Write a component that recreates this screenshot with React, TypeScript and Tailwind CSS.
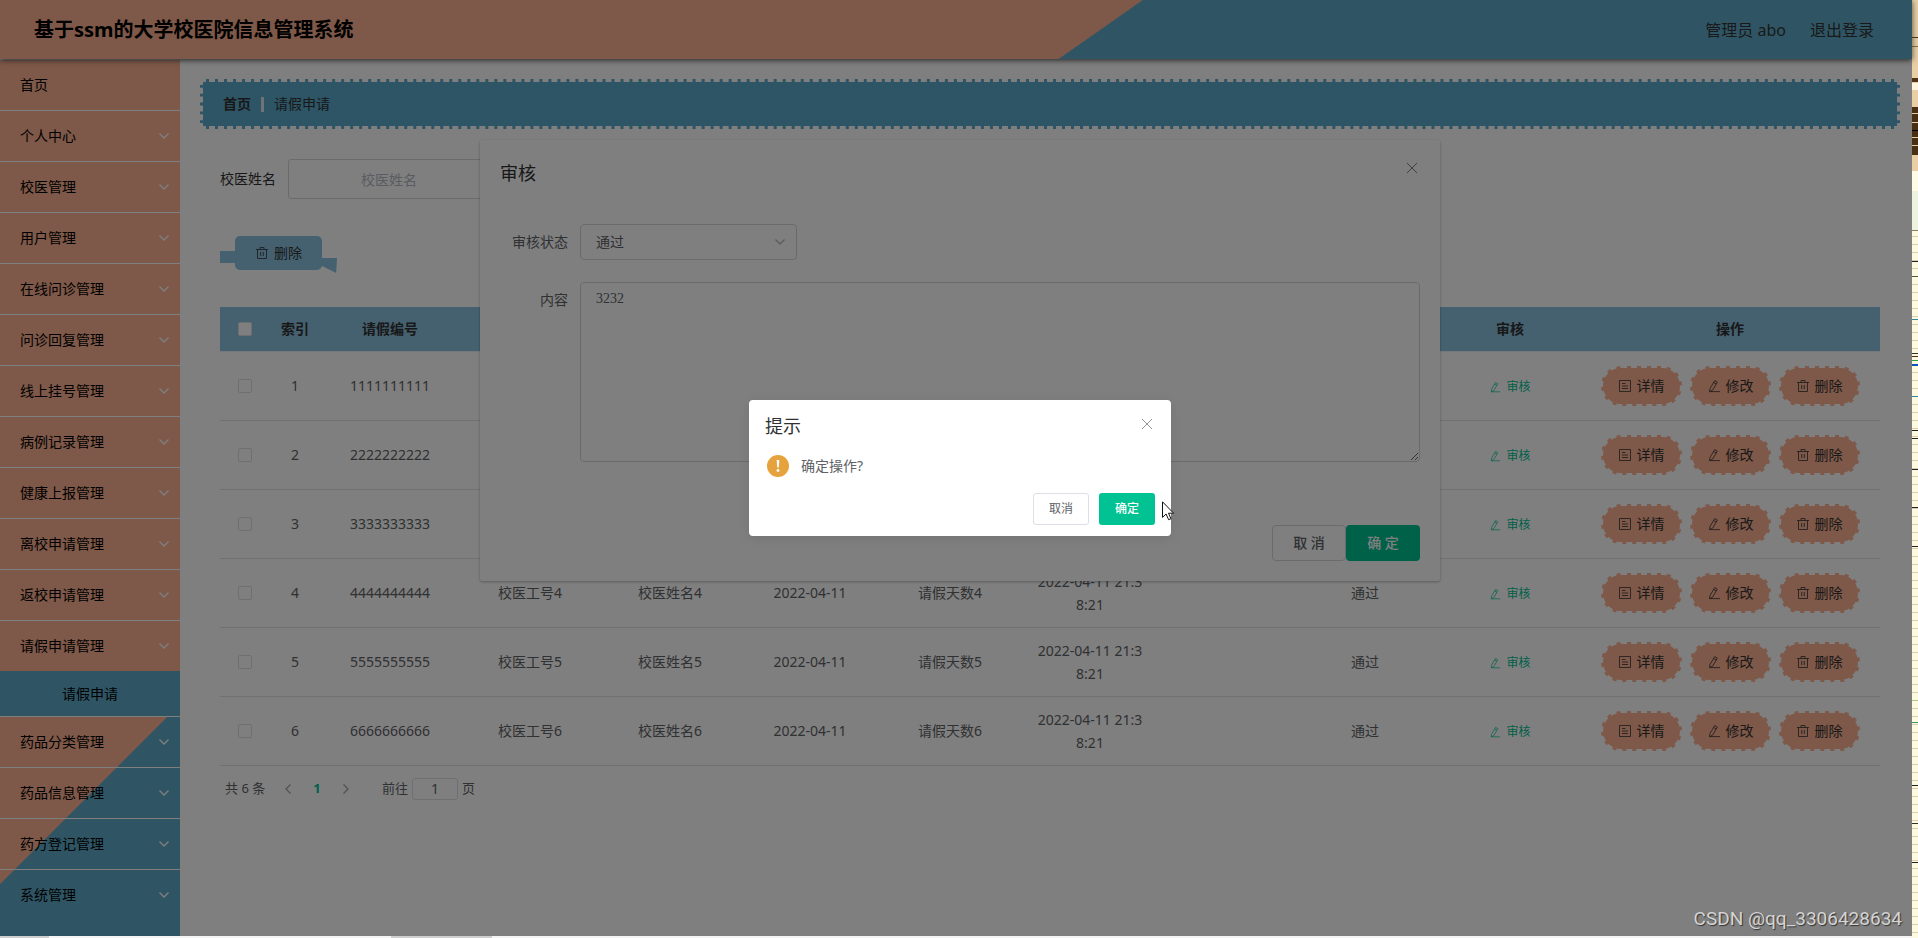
import React from "react";

const MENU = [
  "首页",
  "个人中心",
  "校医管理",
  "用户管理",
  "在线问诊管理",
  "问诊回复管理",
  "线上挂号管理",
  "病例记录管理",
  "健康上报管理",
  "离校申请管理",
  "返校申请管理",
  "请假申请管理",
  "药品分类管理",
  "药品信息管理",
  "药方登记管理",
  "系统管理",
];

const ACTIVE = "请假申请管理";

const HEADERS = ["索引", "请假编号", "校医工号", "校医姓名", "请假日期", "请假天数", "申请时间", "审核回复", "审核状态", "审核", "操作"];

const ROWS = [1, 2, 3, 4, 5, 6].map((n) => ({
  index: n,
  code: String(n).repeat(10),
  doctorId: `校医工号${n}`,
  doctorName: `校医姓名${n}`,
  date: "2022-04-11",
  days: `请假天数${n}`,
  time: "2022-04-11 21:38:21",
  status: "通过",
}));

function ChevronDown({ className = "" }: { className?: string }) {
  return (
    <svg className={className} width="12" height="12" viewBox="0 0 12 12" fill="none" stroke="currentColor" strokeWidth="1.3" aria-hidden="true">
      <path d="M1.5 3.5 6 8l4.5-4.5" />
    </svg>
  );
}

function TrashIcon() {
  return (
    <svg width="14" height="14" viewBox="0 0 14 14" fill="none" stroke="currentColor" strokeWidth="0.8" aria-hidden="true">
      <path d="M1 3.5h12M5 3.5v-2h4v2M2.5 3.5v9h9v-9M5.7 6v4M8.3 6v4" />
    </svg>
  );
}

function EditIcon({ size = 14 }: { size?: number }) {
  return (
    <svg width={size} height={size} viewBox="0 0 14 14" fill="none" stroke="currentColor" strokeWidth="0.8" aria-hidden="true">
      <path d="M7.7 1.6 10.3 3.1 5.6 11.2 2.6 12.6 2.9 9.7zM6.6 3.5l2.6 1.5M2.6 12.6H13" strokeLinejoin="round" />
    </svg>
  );
}

function DocIcon() {
  return (
    <svg width="14" height="14" viewBox="0 0 14 14" fill="none" stroke="currentColor" strokeWidth="0.8" aria-hidden="true">
      <path d="M1.5 1.5h11v11h-11zM4 4.5h3.5M4 7h6M4 9.5h6" />
    </svg>
  );
}

function CloseIcon() {
  return (
    <svg width="12" height="12" viewBox="0 0 12 12" fill="none" stroke="currentColor" aria-hidden="true">
      <path d="M1 1l10 10M11 1 1 11" />
    </svg>
  );
}

function Header() {
  return (
    <header className="relative z-10 mb-px flex h-[59px] items-center justify-between bg-[linear-gradient(145deg,#fcb090_57.2%,#5eabca_57.3%)] pr-[38px] pl-[34px] shadow-[0_1px_6px_#444]">
      <h1 className="text-xl font-bold text-black">基于ssm的大学校医院信息管理系统</h1>
      <div className="flex gap-6 text-base text-[#333]">
        <span>管理员 abo</span>
        <a href="#logout">退出登录</a>
      </div>
    </header>
  );
}

function Sidebar() {
  return (
    <nav className="w-[180px] shrink-0 bg-[linear-gradient(135deg,#fcb090_78%,#5eabca_78.1%)]">
      <ul className="divide-y divide-white text-sm text-black">
        {MENU.map((name) => (
          <li key={name}>
            <a href="#menu" className="flex h-[50px] items-center justify-between pr-[10px] pl-5">
              {name}
              {name !== "首页" && <ChevronDown className="text-white" />}
            </a>
            {name === ACTIVE && (
              <a href="#leave" className="flex h-[45px] items-center justify-center bg-[#5eabca]">
                请假申请
              </a>
            )}
          </li>
        ))}
      </ul>
    </nav>
  );
}

function Check({ label }: { label: string }) {
  return (
    <input
      type="checkbox"
      aria-label={label}
      className="mx-auto block size-[14px] appearance-none rounded-xs border border-[#dcdfe6] bg-white"
    />
  );
}

function RowButton({ icon, children }: { icon: React.ReactNode; children: React.ReactNode }) {
  return (
    <button className="flex h-10 w-[81px] items-center justify-center gap-[5px] rounded-[20px] border-2 border-dashed border-white bg-[#fcb090] text-sm text-[#333]">
      {icon}
      {children}
    </button>
  );
}

function LeaveTable() {
  return (
    <table className="mt-[37px] w-full table-fixed border-collapse text-center text-sm leading-[23px] text-[#606266]">
      <colgroup>
        <col className="w-[50px]" />
        <col className="w-[50px]" />
        <col className="w-[140px]" />
        <col className="w-[140px]" />
        <col className="w-[140px]" />
        <col className="w-[140px]" />
        <col className="w-[140px]" />
        <col className="w-[140px]" />
        <col className="w-[130px]" />
        <col className="w-[150px]" />
        <col className="w-[140px]" />
        <col className="w-[300px]" />
      </colgroup>
      <thead>
        <tr className="h-11 border-b border-[#ebeef5] bg-[#8ac2de] text-[#303133]">
          <th>
            <Check label="全选" />
          </th>
          {HEADERS.map((h) => (
            <th key={h} className="font-bold">
              {h}
            </th>
          ))}
        </tr>
      </thead>
      <tbody>
        {ROWS.map((r) => (
          <tr key={r.index} className="h-[69px] border-b border-[#dfe2ea]">
            <td>
              <Check label={`选择 ${r.index}`} />
            </td>
            <td>{r.index}</td>
            <td>{r.code}</td>
            <td>{r.doctorId}</td>
            <td>{r.doctorName}</td>
            <td>{r.date}</td>
            <td>{r.days}</td>
            <td className="px-3 break-all">{r.time}</td>
            <td />
            <td>{r.status}</td>
            <td>
              <button className="inline-flex items-center gap-[5px] align-middle text-xs text-[#00c292]">
                <EditIcon size={12} />
                审核
              </button>
            </td>
            <td>
              <div className="flex justify-center gap-2">
                <RowButton icon={<DocIcon />}>详情</RowButton>
                <RowButton icon={<EditIcon />}>修改</RowButton>
                <RowButton icon={<TrashIcon />}>删除</RowButton>
              </div>
            </td>
          </tr>
        ))}
      </tbody>
    </table>
  );
}

function Pagination() {
  return (
    <div className="mt-3 flex h-[22px] items-center pl-[5px] text-[13px] text-[#606266]">
      <span className="w-[57px]">共 6 条</span>
      <button aria-label="上一页" className="text-[#a0a4ac]">
        <ChevronDown className="rotate-90" />
      </button>
      <button className="w-[46px] font-bold text-[#00c292]">1</button>
      <button aria-label="下一页" className="text-[#a0a4ac]">
        <ChevronDown className="-rotate-90" />
      </button>
      <label className="ml-[30px] flex items-center gap-1">
        前往
        <input
          type="text"
          defaultValue="1"
          aria-label="页码"
          className="h-[22px] w-[46px] rounded-[3px] border border-[#dcdfe6] bg-white text-center text-sm"
        />
        页
      </label>
    </div>
  );
}

function Main() {
  return (
    <main className="min-w-0 flex-1 bg-white pt-[19px] pr-3 pl-5">
      <div className="flex h-[50px] items-center border-[3px] border-dashed border-white bg-[#5aabca] px-5 text-sm text-[#303133]">
        <a href="#home" className="font-bold">
          首页
        </a>
        <span className="mx-[10px] h-[15px] w-[3px] bg-[#dfe4ed]" />
        <span>请假申请</span>
      </div>
      <div className="px-5">
        <label className="mt-[30px] flex h-10 items-center gap-3 text-sm text-[#303133]">
          校医姓名
          <input
            type="text"
            placeholder="校医姓名"
            className="h-10 w-[202px] rounded-[3px] border border-[#d3d6de] bg-white text-center placeholder:text-[#b5b9c2]"
          />
        </label>
        <div className="relative mt-[37px] px-[15px]">
          <span className="absolute top-[15px] left-0 h-3 w-4 bg-[#8ac2de]" />
          <span className="absolute top-[22px] left-[101px] h-[15px] w-4 bg-[#8ac2de] [clip-path:polygon(0_0,100%_0,95%_100%,0_50%)]" />
          <button className="relative flex h-[34px] w-[87px] items-center justify-center gap-[5px] rounded-[5px] bg-[#8ac2de] text-sm text-[#303133]">
            <TrashIcon />
            删除
          </button>
        </div>
        <LeaveTable />
        <Pagination />
      </div>
    </main>
  );
}

function ReviewDialog() {
  return (
    <div className="absolute inset-0 flex items-start justify-center pt-[140px] pl-0.5">
      <section role="dialog" aria-label="审核" className="w-[960px] rounded-xs bg-white px-5 pb-5 text-sm text-[#606266] shadow-[0_1px_3px_rgba(0,0,0,0.3)]">
        <div className="flex h-[84px] items-start justify-between pt-5 pr-[2px]">
          <h2 className="text-lg leading-[26px] text-[#303133]">审核</h2>
          <button aria-label="关闭" className="mt-[2px] text-[#7d8086]">
            <CloseIcon />
          </button>
        </div>
        <div className="flex items-center">
          <label htmlFor="status" className="w-20 pr-3 text-right">
            审核状态
          </label>
          <div className="relative">
            <select id="status" defaultValue="通过" className="h-9 w-[217px] appearance-none rounded border border-[#d3d6de] bg-white pl-[15px]">
              <option>通过</option>
              <option>不通过</option>
            </select>
            <ChevronDown className="pointer-events-none absolute top-3 right-[11px] text-[#b0b4bd]" />
          </div>
        </div>
        <div className="mt-[22px] flex items-start">
          <label htmlFor="content" className="w-20 pt-2 pr-3 text-right">
            内容
          </label>
          <textarea
            id="content"
            defaultValue="3232"
            className="block h-[180px] flex-1 resize-y rounded border border-[#d3d6de] bg-white px-[15px] py-[6px] font-['Liberation_Serif','Noto_Sans_CJK_SC',serif]"
          />
        </div>
        <div className="mt-[63px] flex justify-end font-medium">
          <button className="h-9 w-[74px] rounded border border-[#d3d6de] bg-white">取 消</button>
          <button className="h-9 w-[74px] rounded bg-[#00c292] text-white">确 定</button>
        </div>
      </section>
    </div>
  );
}

function ConfirmBox() {
  return (
    <div className="absolute inset-0 flex items-center justify-center pb-0.5 pl-0.5">
      <section role="alertdialog" aria-label="提示" className="relative w-[422px] rounded bg-white px-4 pb-[11px] shadow-[0_2px_12px_rgba(0,0,0,0.1)]">
        <div className="flex items-start justify-between pt-[15px] pr-[2px]">
          <h2 className="text-lg leading-[22px] text-[#303133]">提示</h2>
          <button aria-label="关闭" className="mt-[3px] text-[#909399]">
            <CloseIcon />
          </button>
        </div>
        <div className="mt-[18px] flex items-center gap-3 pl-[2px] text-sm leading-[22px] text-[#606266]">
          <svg width="22" height="22" viewBox="0 0 22 22" aria-hidden="true">
            <circle cx="11" cy="11" r="11" fill="#e6a23c" />
            <path d="M9.7 5h2.6l-.5 7.5h-1.6z" fill="#fff" />
            <circle cx="11" cy="15.5" r="1.4" fill="#fff" />
          </svg>
          确定操作?
        </div>
        <div className="mt-4 flex justify-end gap-[10px] text-xs">
          <button className="h-8 w-14 rounded-[3px] border border-[#dcdfe6] bg-white text-[#606266]">取消</button>
          <button className="h-8 w-14 rounded-[3px] bg-[#00c292] font-medium text-white">确定</button>
        </div>
        <svg className="absolute top-[101px] left-[413px]" width="13" height="20" viewBox="0 0 13 20" aria-hidden="true">
          <path d="M.5.8v15.6l3.6-3.4 2.5 5.7 2.4-1-2.5-5.5h5.1z" fill="#fff" stroke="#111" />
        </svg>
      </section>
    </div>
  );
}

const BANDS: [number, number, string][] = [
  [0, 171, "#e9cfa3"],
  [37, 1, "#4a3010"],
  [46, 1, "#8a6a3a"],
  [78, 4, "#4f3515"],
  [83, 7, "#fdf5dc"],
  [107, 48, "#4a3012"],
  [113, 1, "#e9cfa3"],
  [122, 1, "#e9cfa3"],
  [130, 1, "#000000"],
  [137, 1, "#e9cfa3"],
  [145, 1, "#e9cfa3"],
  [171, 20, "#fefce4"],
  [191, 39, "#eef3e0"],
  [230, 1, "#8a8060"],
  [261, 1, "#222222"],
  [276, 1, "#555544"],
  [319, 1, "#2b8aa0"],
  [353, 1, "#333322"],
  [356, 1, "#4a3012"],
  [360, 1, "#2fa040"],
  [364, 2, "#0a56b8"],
  [396, 1, "#2b8aa0"],
  [430, 1, "#222222"],
  [438, 1, "#222222"],
  [469, 1, "#222222"],
  [507, 1, "#222222"],
  [546, 1, "#222222"],
  [700, 1, "#b5c77c"],
  [722, 1, "#2f9a60"],
  [785, 1, "#222222"],
  [823, 1, "#333322"],
  [862, 1, "#222222"],
];

function EdgeStrip() {
  return (
    <div className="relative w-1.5 shrink-0 overflow-hidden bg-[#fefae0]">
      <svg className="absolute top-0 left-0" width="6" height="938" aria-hidden="true">
        {Array.from({ length: 90 }, (_, i) => (
          <rect key={i} x="0" y={236 + i * 8} width="6" height="1" fill="#dccdb0" />
        ))}
        {BANDS.map(([y, h, c]) => (
          <rect key={y} x="0" y={y} width="6" height={h} fill={c} />
        ))}
      </svg>
    </div>
  );
}

export default function App() {
  return (
    <div className="relative flex min-h-screen font-['Noto_Sans','Noto_Sans_CJK_SC',sans-serif]">
      <div className="flex min-w-0 flex-1 flex-col">
        <Header />
        <div className="flex flex-1">
          <Sidebar />
          <Main />
        </div>
        <div className="flex h-0.5 bg-[#f4f4f4]">
          <span className="w-[49px] bg-[#cfcfcf]" />
          <span className="ml-[342px] w-[101px] bg-[#cfcfcf]" />
        </div>
      </div>
      <EdgeStrip />
      <ReviewDialog />
      <div className="absolute top-0 right-1.5 bottom-0.5 left-0 z-20 bg-black/50" />
      <div className="absolute inset-0 z-30">
        <ConfirmBox />
        <span className="absolute right-4 bottom-[5px] font-['Roboto',sans-serif] text-[19px] text-[#d4d4d4] [text-shadow:1px_1px_1px_#333]">
          CSDN @qq_3306428634
        </span>
      </div>
    </div>
  );
}
